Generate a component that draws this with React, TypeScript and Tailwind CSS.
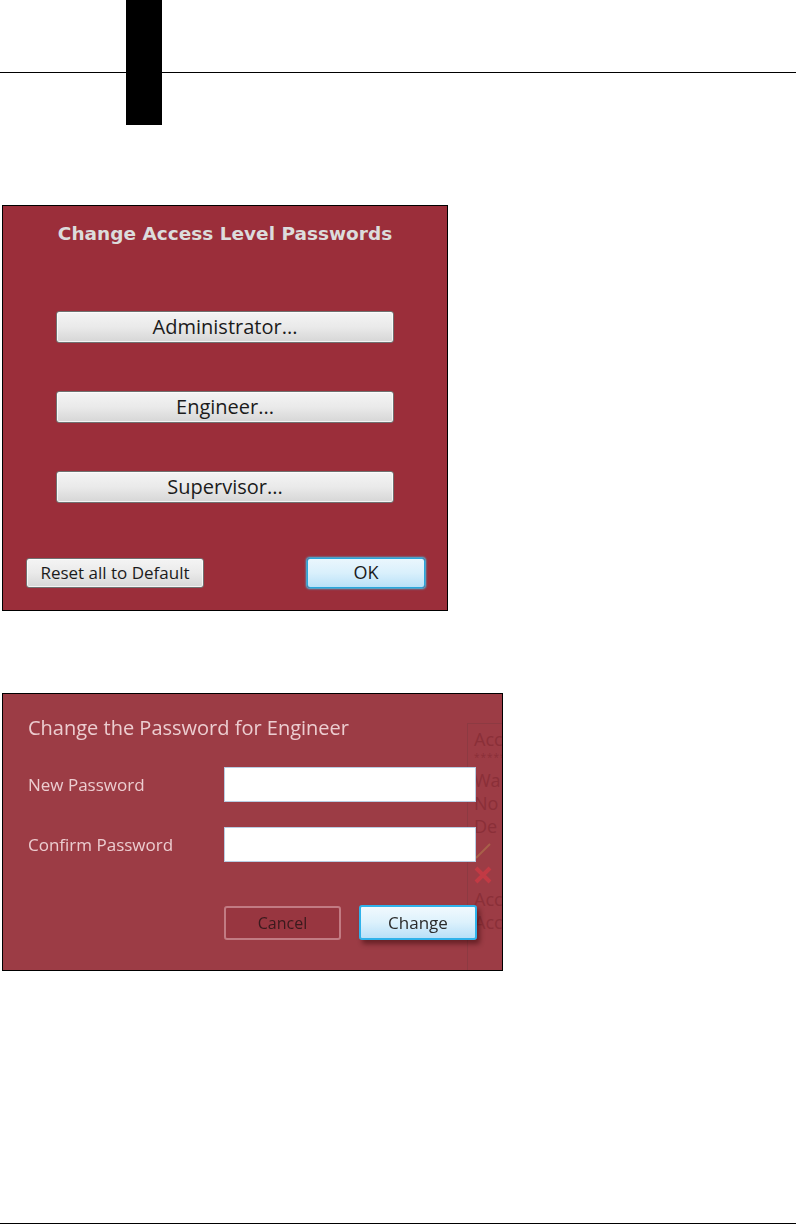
import React from "react";

const grayBtn =
  "flex items-center justify-center rounded-[3px] border border-[#707070] bg-gradient-to-b from-[#f4f4f4] via-[#eaeaea] to-[#d6d6d6] text-[#1b1b1b] shadow-[inset_0_0_0_1px_rgba(255,255,255,0.7)]";

const RoleButton = ({ label }: { label: string }) => (
  <button className={`${grayBtn} ml-[53px] h-[32px] w-[338px] text-[20px]`}>{label}</button>
);

const GhostPanel = () => (
  <div className="absolute left-[464px] top-[29px] h-[300px] w-[36px] overflow-hidden border-l border-t border-[#8d3a42] pl-[6px] pt-[4px] text-[18px] leading-[23px] text-[#8a2f38]">
    <p>Acc</p>
    <p className="text-[10px] leading-[12px] tracking-[1px]">*****</p>
    <p className="mt-[6px]">Wa</p>
    <p>No</p>
    <p>De</p>
    <svg width="20" height="20" viewBox="0 0 20 20" className="mt-[2px]">
      <path d="M2 18 L16 4" stroke="#a8604a" strokeWidth="2" />
    </svg>
    <svg width="22" height="22" viewBox="0 0 22 22" className="mt-[4px] -ml-[2px]">
      <path d="M4 4 L18 18 M18 4 L4 18" stroke="#c23a44" strokeWidth="4" />
    </svg>
    <p className="mt-[2px]">Acc</p>
    <p>Acc</p>
  </div>
);

const App = () => {
  return (
    <div
      className="flex h-[1225px] w-[796px] flex-col overflow-hidden bg-white"
      style={{ fontFamily: "'Open Sans', 'Noto Sans', sans-serif" }}
    >
      {/* page header rule and tab */}
      <div className="relative h-[125px] shrink-0">
        <div className="mt-[72px] h-px bg-black" />
        <div className="absolute left-[126px] top-0 h-[125px] w-[36px] bg-black" />
      </div>

      {/* access level dialog */}
      <div className="ml-[2px] mt-[80px] flex h-[406px] w-[446px] shrink-0 flex-col border border-black bg-[#9b2e3a]">
        <h2
          className="mt-[14px] text-center text-[18.5px] font-bold text-[#dcdcdc]"
          style={{ fontFamily: "'DejaVu Sans', Verdana, sans-serif" }}
        >
          Change Access Level Passwords
        </h2>
        <div className="mt-[63px] flex flex-col gap-[48px]">
          <RoleButton label="Administrator..." />
          <RoleButton label="Engineer..." />
          <RoleButton label="Supervisor..." />
        </div>
        <div className="mt-[55px] flex items-center justify-between pl-[23px] pr-[22px]">
          <button className={`${grayBtn} h-[30px] w-[178px] text-[17px]`}>Reset all to Default</button>
          <button className="flex h-[30px] w-[118px] items-center justify-center rounded-[3px] border border-[#2aa6dc] bg-gradient-to-b from-[#eaf6fd] via-[#d9f0fc] to-[#b9e1f8] text-[18px] text-[#1b1b1b] shadow-[0_0_2px_1px_#3cc8f4]">
            OK
          </button>
        </div>
      </div>

      {/* change password dialog */}
      <div className="relative ml-[2px] mt-[82px] h-[278px] w-[501px] shrink-0 overflow-hidden border border-black bg-[#9c3c45]">
        <GhostPanel />
        <div className="relative flex flex-col pl-[25px] blur-[0.4px]">
          <h3 className="mt-[19px] text-[20px] text-[#eccdd0]">Change the Password for Engineer</h3>
          <div className="mt-[24px] flex items-center">
            <span className="w-[196px] text-[17px] text-[#eccdd0]">New Password</span>
            <div className="h-[35px] w-[252px] border border-[#b9cde2] bg-white" />
          </div>
          <div className="mt-[25px] flex items-center">
            <span className="w-[196px] text-[17px] text-[#eccdd0]">Confirm Password</span>
            <div className="h-[35px] w-[252px] border border-[#b9cde2] bg-white" />
          </div>
          <div className="mt-[43px] flex items-center pl-[196px]">
            <button className="flex h-[34px] w-[117px] items-center justify-center rounded-[3px] border-2 border-[#c27b83] bg-[#983640] text-[16px] text-[#3a1a1d]">
              Cancel
            </button>
            <button className="ml-[18px] flex h-[35px] w-[118px] items-center justify-center rounded-[3px] border-2 border-[#2fb2ea] bg-gradient-to-b from-[#f1f9fe] via-[#dcf1fc] to-[#b8e0f8] text-[17px] text-[#2b2b2b] shadow-[3px_4px_5px_rgba(40,0,0,0.45)]">
              Change
            </button>
          </div>
        </div>
      </div>

      {/* page footer rule */}
      <div className="mb-[1px] mt-auto h-px shrink-0 bg-black" />
    </div>
  );
};

export default App;
